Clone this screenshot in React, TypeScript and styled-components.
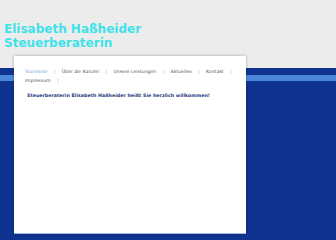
import React from "react";
import styled, { createGlobalStyle } from "styled-components";

const GlobalStyle = createGlobalStyle`
  html, body {
    margin: 0;
    padding: 0;
    width: 336px;
    height: 240px;
    overflow: hidden;
  }
  body {
    font-family: "DejaVu Sans", Verdana, sans-serif;
    background: #0f3391;
  }
`;

const Page = styled.div`
  position: relative;
  width: 336px;
  height: 240px;
  display: flex;
  flex-direction: column;
`;

const Header = styled.header`
  height: 68px;
  background: #ececec;
  padding: 22px 0 0 4px;
  box-sizing: border-box;
`;

const Title = styled.h1`
  margin: 0;
  font-size: 12px;
  line-height: 14px;
  font-weight: bold;
  color: #3fe2ea;
`;

const Band = styled.div`
  flex: 1;
  background: linear-gradient(
    to bottom,
    #0f3391 0,
    #0f3391 7px,
    #4c88da 7px,
    #4c88da 13px,
    #0f3391 13px
  );
`;

const Panel = styled.main`
  position: absolute;
  left: 14px;
  top: 56px;
  width: 232px;
  height: 178px;
  background: #fff;
  box-shadow: 0 0 3px rgba(0, 0, 0, 0.3);
  border-bottom: 1px solid #9fb8e6;
  box-sizing: border-box;
  padding: 12px 4px 0 11px;
`;

const Nav = styled.nav`
  display: flex;
  flex-wrap: wrap;
  row-gap: 2px;
  font-family: "DejaVu Sans", sans-serif;
  font-size: 4.6px;
  line-height: 7px;
`;

const NavItem = styled.span<{ $active?: boolean }>`
  color: ${(p) => (p.$active ? "#6ea6d8" : "#555")};
  white-space: nowrap;
  &::after {
    content: "|";
    color: #aaa;
    margin: 0 6.4px;
  }
`;

const Welcome = styled.h2`
  margin: 8px 0 0 2px;
  font-size: 4.75px;
  line-height: 8px;
  font-weight: bold;
  color: #1f377f;
  white-space: nowrap;
`;

const items = [
  "Startseite",
  "Über die Kanzlei",
  "Unsere Leistungen",
  "Aktuelles",
  "Kontakt",
  "Impressum",
];

export default function App(): JSX.Element {
  return (
    <Page>
      <GlobalStyle />
      <Header>
        <Title>
          Elisabeth Haßheider
          <br />
          Steuerberaterin
        </Title>
      </Header>
      <Band />
      <Panel>
        <Nav>
          {items.map((item, i) => (
            <NavItem key={item} $active={i === 0}>
              {item}
            </NavItem>
          ))}
        </Nav>
        <Welcome>
          Steuerberaterin Elisabeth Haßheider heißt Sie herzlich willkommen!
        </Welcome>
      </Panel>
    </Page>
  );
}
